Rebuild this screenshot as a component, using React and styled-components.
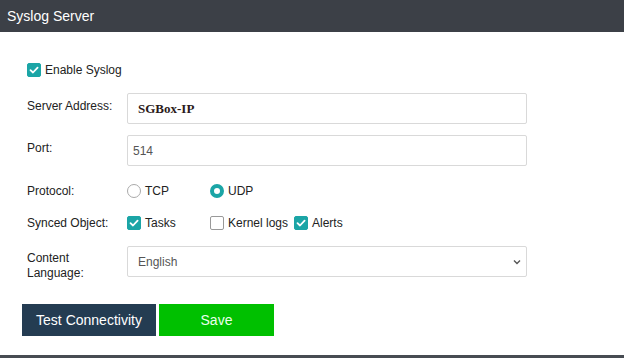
import React, { useState } from "react";
import styled, { createGlobalStyle } from "styled-components";

const GlobalStyle = createGlobalStyle`
  html, body {
    margin: 0;
    padding: 0;
    background: #ffffff;
    font-family: "Liberation Sans", Arial, sans-serif;
  }
`;

const Page = styled.div`
  display: flex;
  flex-direction: column;
  width: 624px;
  height: 358px;
  overflow: hidden;
`;

const Header = styled.div`
  display: flex;
  align-items: center;
  height: 32px;
  padding-left: 7px;
  background-color: #3c4047;
  color: #ffffff;
  font-size: 14px;
`;

const Form = styled.div`
  display: flex;
  flex-direction: column;
  flex: 1;
  padding: 31px 0 0 27px;
`;

const Row = styled.div`
  display: flex;
  align-items: ${(p) => (p.$top ? "flex-start" : "center")};
  margin-top: ${(p) => p.$gap || 0}px;
  min-height: 14px;
`;

const Label = styled.div`
  width: 100px;
  flex-shrink: 0;
  font-size: 12px;
  line-height: ${(p) => p.$lh || 14}px;
  color: #222;
  padding-top: ${(p) => p.$pt || 0}px;
`;

const TextInput = styled.div`
  display: flex;
  align-items: center;
  box-sizing: border-box;
  width: 400px;
  height: 31px;
  border: 1px solid #d9d9d9;
  border-radius: 2px;
  padding-left: ${(p) => p.$pl || 10}px;
  font-family: ${(p) =>
    p.$serif ? '"Liberation Serif", "Times New Roman", serif' : '"Liberation Sans", Arial, sans-serif'};
  font-weight: ${(p) => (p.$serif ? 600 : "normal")};
  font-size: ${(p) => (p.$serif ? 13 : 12)}px;
  color: ${(p) => (p.$serif ? "#2b1a1a" : "#555")};
`;

const Select = styled(TextInput)`
  justify-content: space-between;
  padding-right: 4px;
`;

const Options = styled.div`
  display: flex;
  align-items: center;
`;

const Option = styled.label`
  display: flex;
  align-items: center;
  width: ${(p) => (p.$w ? `${p.$w}px` : "auto")};
  font-size: 12px;
  line-height: 14px;
  color: #222;
  cursor: pointer;
`;

const Box = styled.span`
  display: inline-flex;
  align-items: center;
  justify-content: center;
  box-sizing: border-box;
  width: 14px;
  height: 14px;
  margin-right: 4px;
  border-radius: 2px;
  background: ${(p) => (p.$on ? "#1ba5a6" : "#fff")};
  border: 1px solid ${(p) => (p.$on ? "#1ba5a6" : "#999")};
`;

const Radio = styled.span`
  display: inline-block;
  box-sizing: border-box;
  width: 14px;
  height: 14px;
  margin-right: 4px;
  border-radius: 50%;
  border: ${(p) => (p.$on ? "4px solid #1ba5a6" : "1px solid #aaa")};
  background: #fff;
`;

const Buttons = styled.div`
  display: flex;
  gap: 3px;
  margin: 23px 0 0 -5px;
`;

const Button = styled.button`
  width: ${(p) => p.$w}px;
  height: 32px;
  padding: 0;
  border: none;
  background-color: ${(p) => p.$bg};
  color: ${(p) => p.$fg || "#fff"};
  font-family: "Liberation Sans", Arial, sans-serif;
  font-size: 14px;
  cursor: pointer;
`;

const Footer = styled.div`
  height: 3px;
  background-color: #474c52;
`;

const Check = () => (
  <svg width="10" height="10" viewBox="0 0 10 10">
    <path d="M1.5 5.2 L4 7.5 L8.6 2.6" fill="none" stroke="#fff" strokeWidth="1.8" strokeLinecap="round" strokeLinejoin="round" />
  </svg>
);

const CheckBox = ({ on, onClick, children, w }) => (
  <Option $w={w} onClick={onClick}>
    <Box $on={on}>{on && <Check />}</Box>
    {children}
  </Option>
);

const App = () => {
  const [enabled, setEnabled] = useState(true);
  const [proto, setProto] = useState("UDP");
  const [synced, setSynced] = useState({ tasks: true, kernel: false, alerts: true });
  const toggle = (k) => setSynced((s) => ({ ...s, [k]: !s[k] }));

  return (
    <Page>
      <GlobalStyle />
      <Header>Syslog Server</Header>
      <Form>
        <Row>
          <CheckBox on={enabled} onClick={() => setEnabled(!enabled)}>
            Enable Syslog
          </CheckBox>
        </Row>
        <Row $top $gap={16}>
          <Label $pt={6}>Server Address:</Label>
          <TextInput $serif>SGBox-IP</TextInput>
        </Row>
        <Row $top $gap={11}>
          <Label $pt={6}>Port:</Label>
          <TextInput $pl={5}>514</TextInput>
        </Row>
        <Row $gap={18}>
          <Label>Protocol:</Label>
          <Options>
            <Option $w={83} onClick={() => setProto("TCP")}>
              <Radio $on={proto === "TCP"} />
              TCP
            </Option>
            <Option onClick={() => setProto("UDP")}>
              <Radio $on={proto === "UDP"} />
              UDP
            </Option>
          </Options>
        </Row>
        <Row $gap={18}>
          <Label>Synced Object:</Label>
          <Options>
            <CheckBox w={83} on={synced.tasks} onClick={() => toggle("tasks")}>
              Tasks
            </CheckBox>
            <CheckBox w={84} on={synced.kernel} onClick={() => toggle("kernel")}>
              Kernel logs
            </CheckBox>
            <CheckBox on={synced.alerts} onClick={() => toggle("alerts")}>
              Alerts
            </CheckBox>
          </Options>
        </Row>
        <Row $top $gap={16}>
          <Label $pt={5} $lh={15}>
            Content
            <br />
            Language:
          </Label>
          <Select>
            English
            <svg width="10" height="10" viewBox="0 0 10 10">
              <path d="M2 3.5 L5 6.5 L8 3.5" fill="none" stroke="#555" strokeWidth="1.4" />
            </svg>
          </Select>
        </Row>
        <Buttons>
          <Button $w={134} $bg="#243c52">Test Connectivity</Button>
          <Button $w={115} $bg="#00c000" $fg="#eaffea">Save</Button>
        </Buttons>
      </Form>
      <Footer />
    </Page>
  );
};

export default App;
